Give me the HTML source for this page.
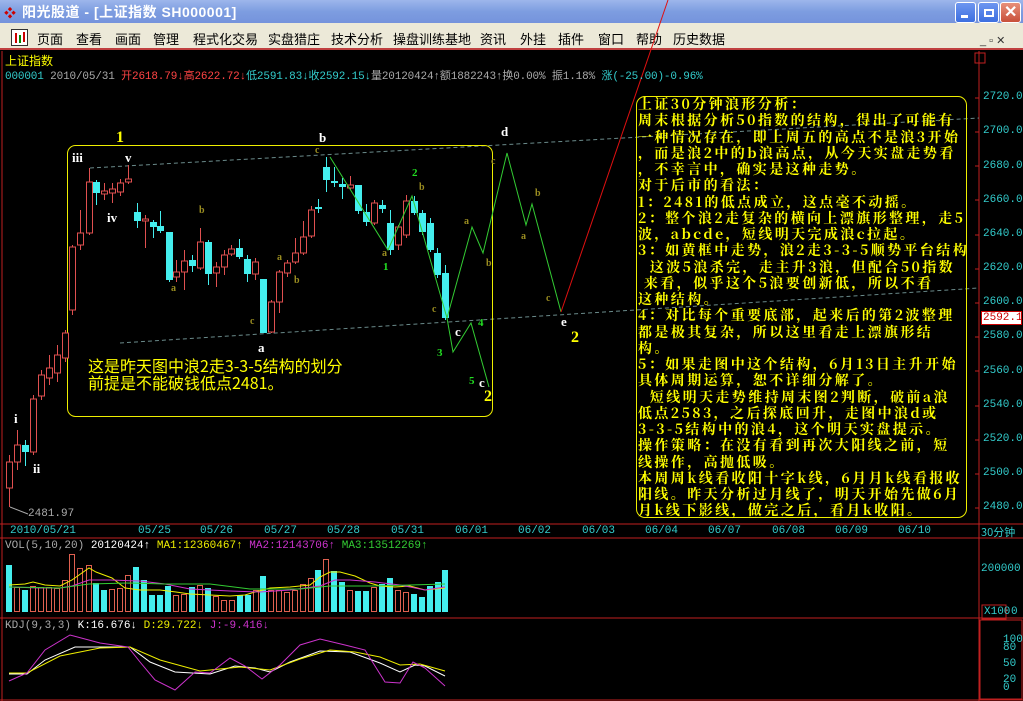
<!DOCTYPE html>
<html><head><meta charset="utf-8">
<style>
*{margin:0;padding:0;box-sizing:border-box}
body{width:1023px;height:701px;overflow:hidden;background:#000;position:relative;font-family:"Liberation Sans","Noto Sans CJK SC",sans-serif}
.a{position:absolute;white-space:pre}
#title{left:0;top:0;width:1023px;height:23px;background:linear-gradient(#9db6ec,#7d9de0 50%,#7593dc);}
#menu{left:0;top:23px;width:1023px;height:27px;background:#ece9d8;border-bottom:2px solid #c04040}
.m{position:absolute;top:29px;font-size:13px;color:#000;font-family:"Noto Sans CJK SC",sans-serif}
.wb{position:absolute;top:2px;width:21px;height:21px;border:1px solid #fff;border-radius:3px;background:linear-gradient(#6d96f0,#3c6fe0)}
.sm{font-family:"Liberation Mono","Noto Sans CJK SC",monospace;font-size:11px}
.px{position:absolute;left:983px;font-size:11px;color:#3cc;font-family:"Liberation Mono",monospace}
.dt{position:absolute;top:525px;font-size:11px;color:#3cc;font-family:"Liberation Mono",monospace}
#tb{left:636px;top:96px;width:331px;height:422px;border:1px solid #ee0;border-radius:9px;}
#tx{left:638px;top:96px;font-family:"Noto Serif CJK SC","WenQuanYi Zen Hei",serif;font-weight:bold;font-size:14px;letter-spacing:2.4px;color:#ff0}
#tx div{height:16.25px;line-height:16.25px;overflow:visible;white-space:pre}
.w{position:absolute;color:#fff;font-family:"Liberation Serif",serif;font-weight:bold;font-size:13px}
.o{position:absolute;color:#998c20;font-family:"Liberation Serif",serif;font-weight:bold;font-size:10px}
.g{position:absolute;color:#2d2;font-family:"Liberation Serif",serif;font-weight:bold;font-size:11px}
.y{position:absolute;color:#ff0;font-family:"Liberation Serif",serif;font-weight:bold;font-size:16px}
</style></head><body>
<div class="a" id="title"></div>
<div class="a" style="left:4px;top:4px;color:#c00;font-size:12px">❖</div>
<div class="a" style="left:22px;top:2px;color:#fff;font-weight:bold;font-size:14px;font-family:'Liberation Sans','Noto Sans CJK SC',sans-serif;letter-spacing:0.5px">阳光股道 - [上证指数 SH000001]</div>
<div class="wb" style="left:955px"><div style="position:absolute;left:5px;top:12px;width:7px;height:3px;background:#fff"></div></div>
<div class="wb" style="left:978px"><div style="position:absolute;left:5px;top:6px;width:10px;height:8px;border:2px solid #fff"></div></div>
<div class="wb" style="left:1000px;background:linear-gradient(#e8907a,#c8503a)"><div style="position:absolute;left:3px;top:-1px;color:#fff;font-size:16px;font-weight:bold">✕</div></div>
<div class="a" id="menu"></div>
<div class="a" style="left:11px;top:29px;width:17px;height:17px;border:1px solid #333;background:#fff"><div style="position:absolute;left:3px;top:3px;width:2px;height:10px;background:#c00"></div><div style="position:absolute;left:7px;top:5px;width:2px;height:8px;background:#080"></div><div style="position:absolute;left:11px;top:2px;width:2px;height:10px;background:#c00"></div></div>
<div class="m" style="left:37px">页面</div><div class="m" style="left:76px">查看</div><div class="m" style="left:115px">画面</div><div class="m" style="left:153px">管理</div><div class="m" style="left:193px">程式化交易</div><div class="m" style="left:268px">实盘猎庄</div><div class="m" style="left:331px">技术分析</div><div class="m" style="left:393px">操盘训练基地</div><div class="m" style="left:480px">资讯</div><div class="m" style="left:520px">外挂</div><div class="m" style="left:558px">插件</div><div class="m" style="left:598px">窗口</div><div class="m" style="left:636px">帮助</div><div class="m" style="left:673px">历史数据</div>
<div class="a" style="left:980px;top:34px;font-size:11px;color:#333">_ ▫ ✕</div>

<svg class="a" style="left:0;top:0" width="1023" height="701">
<g stroke="#c02020" stroke-width="1" fill="none">
<line x1="2" y1="51" x2="2" y2="701"/>
<line x1="979" y1="51" x2="979" y2="701"/>
<line x1="0" y1="524" x2="1023" y2="524"/>
<line x1="0" y1="538" x2="1023" y2="538"/>
<line x1="0" y1="618" x2="1023" y2="618"/>
<line x1="0" y1="700" x2="1023" y2="700"/>
<rect x="980" y="620" width="42" height="79"/>
<rect x="982" y="605" width="24" height="14"/>
<rect x="975" y="53" width="10" height="10"/>
</g>
<g stroke="#c02020" stroke-width="1">
<line x1="975" y1="98" x2="979" y2="98"/><line x1="975" y1="132" x2="979" y2="132"/><line x1="975" y1="166" x2="979" y2="166"/><line x1="975" y1="200" x2="979" y2="200"/><line x1="975" y1="235" x2="979" y2="235"/><line x1="975" y1="269" x2="979" y2="269"/><line x1="975" y1="303" x2="979" y2="303"/><line x1="975" y1="337" x2="979" y2="337"/><line x1="975" y1="371" x2="979" y2="371"/><line x1="975" y1="406" x2="979" y2="406"/><line x1="975" y1="440" x2="979" y2="440"/><line x1="975" y1="474" x2="979" y2="474"/><line x1="975" y1="508" x2="979" y2="508"/>
</g>
<line x1="90" y1="168" x2="979" y2="118" stroke="#6a8a8a" stroke-dasharray="4,3"/>
<line x1="120" y1="343" x2="979" y2="288" stroke="#6a8a8a" stroke-dasharray="4,3"/>
<rect x="67.5" y="145.5" width="425" height="271" rx="8" fill="none" stroke="#ee0"/>
<g id="c"></g>
<polyline points="330,157 388,250 412,196 447,318 453,352 471,323 489,387" fill="none" stroke="#3c3"/>
<polyline points="447,318 472,227 483,253 507,153 526,225 532,204 561,312" fill="none" stroke="#3c3"/>
<line x1="561" y1="312" x2="668" y2="0" stroke="#e01010"/>
<line x1="10" y1="507" x2="28" y2="514" stroke="#aaa"/>
<g id="v"></g>
<polyline points="9,585 25,584 33,582 45,585 60,586 72,580 89,568 96,572 104,575 112,578 125,588 140,590 160,590 176,592 190,594 210,595 230,596 245,595 255,592 270,588 290,587 310,585 320,577 330,572 340,572 355,576 370,583 380,586 395,587 410,586 425,590 445,588" fill="none" stroke="#ee0"/>
<polyline points="9,587 40,588 60,588 72,586 89,580 110,580 140,581 165,584 190,589 230,591 260,592 290,590 320,586 335,580 350,580 375,582 400,585 425,590 445,587" fill="none" stroke="#c3c"/>
<polyline points="9,587 60,588 89,584 130,583 165,584 210,584 250,589 300,589 330,586 370,586 410,585 445,584" fill="none" stroke="#3c3"/>
<polyline points="9,674 27,674 45,660 75,647 100,647 130,647 150,662 175,672 210,674 235,666 255,668 270,672 290,662 320,651 350,652 380,663 400,672 415,665 425,666 445,676" fill="none" stroke="#fff"/>
<polyline points="9,673 27,673 60,656 100,648 130,647 160,660 200,671 240,667 270,670 300,659 330,650 355,652 380,657 400,665 420,664 445,671" fill="none" stroke="#ee0"/>
<polyline points="9,681 27,673 45,650 70,635 100,643 128,647 140,662 155,680 175,690 195,672 210,673 230,658 245,666 262,679 280,665 300,645 320,639 345,645 365,650 385,682 400,683 413,662 425,668 445,686" fill="none" stroke="#c3c"/>
</svg>

<div class="a sm" style="left:5px;top:52px;color:#ff0;font-size:12px;font-family:'Noto Sans CJK SC',sans-serif">上证指数</div>
<div class="a sm" style="left:5px;top:67px;color:#aaa;letter-spacing:-0.15px"><span style="color:#3cc">000001</span> 2010/05/31 <span style="color:#f44">开2618.79↓高2622.72↓</span><span style="color:#3cc">低2591.83↓收2592.15↓</span>量20120424↑额1882243↑换0.00% 振1.18% <span style="color:#3cc">涨(-25.00)-0.96%</span></div>

<div class="px" style="top:91px">2720.0</div><div class="px" style="top:125px">2700.0</div><div class="px" style="top:160px">2680.0</div><div class="px" style="top:194px">2660.0</div><div class="px" style="top:228px">2640.0</div><div class="px" style="top:262px">2620.0</div><div class="px" style="top:296px">2600.0</div><div class="px" style="top:330px">2580.0</div><div class="px" style="top:365px">2560.0</div><div class="px" style="top:399px">2540.0</div><div class="px" style="top:433px">2520.0</div><div class="px" style="top:467px">2500.0</div><div class="px" style="top:501px">2480.0</div>
<div class="a" style="left:981px;top:311px;width:41px;height:14px;background:#fff;border:1px solid #c00;color:#c00;font-size:11px;font-family:'Liberation Mono',monospace;line-height:12px;padding-left:1px">2592.1</div>
<div class="px" style="top:563px;left:981px">200000</div>
<div class="px" style="top:606px;left:984px">X100</div><div class="px" style="top:606px;left:1011px">0</div>
<div class="px" style="top:636px;left:1003px;line-height:8px">100<br> 80<br><br> 50<br><br> 20<br>  0</div>

<div class="dt" style="left:10px">2010/05/21</div><div class="dt" style="left:138px">05/25</div><div class="dt" style="left:200px">05/26</div><div class="dt" style="left:264px">05/27</div><div class="dt" style="left:327px">05/28</div><div class="dt" style="left:391px">05/31</div><div class="dt" style="left:455px">06/01</div><div class="dt" style="left:518px">06/02</div><div class="dt" style="left:582px">06/03</div><div class="dt" style="left:645px">06/04</div><div class="dt" style="left:708px">06/07</div><div class="dt" style="left:772px">06/08</div><div class="dt" style="left:835px">06/09</div><div class="dt" style="left:898px">06/10</div>
<div class="a" style="left:981px;top:524px;color:#3cc;font-size:11px;font-family:'Noto Sans CJK SC',sans-serif">30分钟</div>
<div class="a sm" style="left:5px;top:540px;color:#aaa">VOL(5,10,20) <span style="color:#fff">20120424↑</span> <span style="color:#ee0">MA1:12360467↑</span> <span style="color:#c3c">MA2:12143706↑</span> <span style="color:#3c3">MA3:13512269↑</span></div>
<div class="a sm" style="left:5px;top:620px;color:#aaa">KDJ(9,3,3) <span style="color:#fff">K:16.676↓</span> <span style="color:#ee0">D:29.722↓</span> <span style="color:#c3c">J:-9.416↓</span></div>
<div class="a sm" style="left:28px;top:508px;color:#aaa">2481.97</div>

<div class="a" id="tb"></div>
<div class="a" id="tx"><div>上证30分钟浪形分析：</div><div>周末根据分析50指数的结构，得出了可能有</div><div>一种情况存在，即上周五的高点不是浪3开始</div><div>，而是浪2中的b浪高点，从今天实盘走势看</div><div>，不幸言中，确实是这种走势。</div><div>对于后市的看法：</div><div>1：2481的低点成立，这点毫不动摇。</div><div>2：整个浪2走复杂的横向上漂旗形整理，走5</div><div>波，abcde，短线明天完成浪c拉起。</div><div>3：如黄框中走势，浪2走3-3-5顺势平台结构</div><div>  这波5浪杀完，走主升3浪，但配合50指数</div><div> 来看，似乎这个5浪要创新低，所以不看</div><div>这种结构。</div><div>4：对比每个重要底部，起来后的第2波整理</div><div>都是极其复杂，所以这里看走上漂旗形结</div><div>构。</div><div>5：如果走图中这个结构，6月13日主升开始</div><div>具体周期运算，恕不详细分解了。</div><div>  短线明天走势维持周末图2判断，破前a浪</div><div>低点2583，之后探底回升，走图中浪d或</div><div>3-3-5结构中的浪4，这个明天实盘提示。</div><div>操作策略：在没有看到再次大阳线之前，短</div><div>线操作，高抛低吸。</div><div>本周周k线看收阳十字k线，6月月k线看报收</div><div>阳线。昨天分析过月线了，明天开始先做6月</div><div>月k线下影线，做完之后，看月k收阳。</div></div>

<div class="a" style="left:88px;top:357px;color:#ff0;font-size:16px;line-height:17px;font-family:'Noto Sans CJK SC',sans-serif">这是昨天图中浪2走3-3-5结构的划分
前提是不能破钱低点2481。</div>

<div class="y" style="left:116px;top:129px">1</div>
<div class="y" style="left:571px;top:329px">2</div>
<div class="y" style="left:484px;top:388px">2</div>
<div class="w" style="left:72px;top:150px">iii</div><div class="w" style="left:125px;top:150px">v</div><div class="w" style="left:107px;top:210px">iv</div>
<div class="w" style="left:319px;top:130px">b</div><div class="w" style="left:258px;top:340px">a</div><div class="w" style="left:501px;top:124px">d</div><div class="w" style="left:561px;top:314px">e</div><div class="w" style="left:455px;top:324px">c</div><div class="w" style="left:479px;top:375px">c</div>
<div class="w" style="left:14px;top:411px">i</div><div class="w" style="left:33px;top:461px">ii</div>
<div class="g" style="left:412px;top:167px">2</div><div class="g" style="left:383px;top:261px">1</div><div class="g" style="left:437px;top:347px">3</div><div class="g" style="left:478px;top:317px">4</div><div class="g" style="left:469px;top:375px">5</div>
<div class="o" style="left:199px;top:205px">b</div><div class="o" style="left:171px;top:283px">a</div><div class="o" style="left:250px;top:316px">c</div><div class="o" style="left:277px;top:252px">a</div><div class="o" style="left:294px;top:275px">b</div><div class="o" style="left:315px;top:145px">c</div><div class="o" style="left:382px;top:248px">a</div><div class="o" style="left:419px;top:182px">b</div><div class="o" style="left:432px;top:304px">c</div><div class="o" style="left:464px;top:216px">a</div><div class="o" style="left:486px;top:258px">b</div><div class="o" style="left:491px;top:156px">c</div><div class="o" style="left:521px;top:231px">a</div><div class="o" style="left:535px;top:188px">b</div><div class="o" style="left:546px;top:293px">c</div>

<script>
var C=[[9,'r',462,488,455,507],[17,'r',445,462,430,470],[25,'c',445,452,440,466],[33,'r',399,452,395,455],[41,'r',375,396,370,400],[49,'r',368,378,355,385],[57,'r',355,373,345,382],[65,'r',333,358,330,362],[72,'r',247,310,245,315],[80,'r',233,245,210,250],[89,'r',182,233,168,235],[96,'c',182,193,180,205],[104,'r',191,194,183,200],[112,'r',189,193,183,203],[120,'r',183,192,179,196],[128,'r',179,182,165,184],[137,'c',212,221,203,228],[145,'r',219,221,215,248],[153,'c',222,227,220,238],[160,'c',226,231,211,233],[169,'c',232,280,232,282],[176,'r',272,277,260,282],[184,'r',261,272,250,290],[192,'c',260,266,255,272],[200,'r',242,268,228,270],[208,'c',242,274,240,285],[216,'r',267,273,262,287],[224,'r',255,267,250,275],[231,'r',249,254,245,256],[239,'c',248,257,239,259],[247,'c',259,274,255,282],[255,'r',262,274,258,280],[263,'c',279,333,279,333],[271,'r',302,332,300,333],[279,'r',272,302,270,313],[287,'r',263,273,260,277],[295,'r',253,262,238,264],[303,'r',237,253,221,255],[311,'r',210,236,206,238],[318,'c',207,209,199,213],[326,'c',167,180,157,192],[334,'c',181,183,167,187],[342,'c',184,187,178,199],[350,'r',185,188,176,190],[358,'c',185,211,185,214],[366,'c',212,222,204,226],[374,'r',203,223,200,225],[382,'c',205,209,200,213],[390,'c',223,250,210,255],[398,'r',227,245,225,250],[406,'r',201,235,195,238],[414,'c',201,213,196,215],[422,'c',213,232,210,235],[430,'c',223,250,218,252],[437,'c',253,275,248,278],[445,'c',273,318,265,320]];
var s='';C.forEach(function(k){var x=k[0],cl=k[1]=='r'?'#e05050':'#4ee';s+='<line x1="'+(x+.5)+'" y1="'+k[4]+'" x2="'+(x+.5)+'" y2="'+k[5]+'" stroke="'+cl+'"/>';if(k[1]=='r')s+='<rect x="'+(x-2.5)+'" y="'+k[2]+'" width="6" height="'+Math.max(1,k[3]-k[2])+'" fill="#000" stroke="'+cl+'"/>';else s+='<rect x="'+(x-3)+'" y="'+k[2]+'" width="7" height="'+Math.max(1,k[3]-k[2])+'" fill="'+cl+'"/>';});
document.getElementById('c').innerHTML=s;
var V=[[9,'c',565],[17,'r',587],[25,'c',590],[33,'r',586],[41,'r',587],[49,'r',587],[57,'r',588],[65,'r',580],[72,'r',554],[80,'r',568],[89,'r',565],[96,'c',583],[104,'c',590],[112,'r',589],[120,'r',588],[128,'r',575],[136,'c',567],[144,'c',580],[152,'c',595],[160,'c',595],[168,'c',586],[176,'r',595],[184,'r',594],[192,'c',587],[200,'r',585],[208,'c',588],[216,'r',596],[224,'r',600],[232,'r',600],[240,'c',595],[248,'c',595],[256,'r',590],[263,'c',576],[271,'r',590],[279,'r',590],[287,'r',592],[295,'r',590],[303,'r',584],[311,'r',578],[318,'c',570],[326,'r',559],[334,'c',571],[342,'c',582],[350,'r',590],[358,'c',591],[366,'c',591],[374,'r',587],[382,'c',584],[390,'c',578],[398,'r',590],[406,'r',592],[414,'c',594],[422,'c',597],[430,'c',586],[438,'c',582],[445,'c',570]];
s='';V.forEach(function(k){var x=k[0];if(k[1]=='r')s+='<rect x="'+(x-2.5)+'" y="'+k[2]+'.5" width="5" height="'+(611-k[2])+'" fill="none" stroke="#e06050"/>';else s+='<rect x="'+(x-3)+'" y="'+k[2]+'" width="6" height="'+(612-k[2])+'" fill="#4ee"/>';});
document.getElementById('v').innerHTML=s;
</script>
</body></html>
